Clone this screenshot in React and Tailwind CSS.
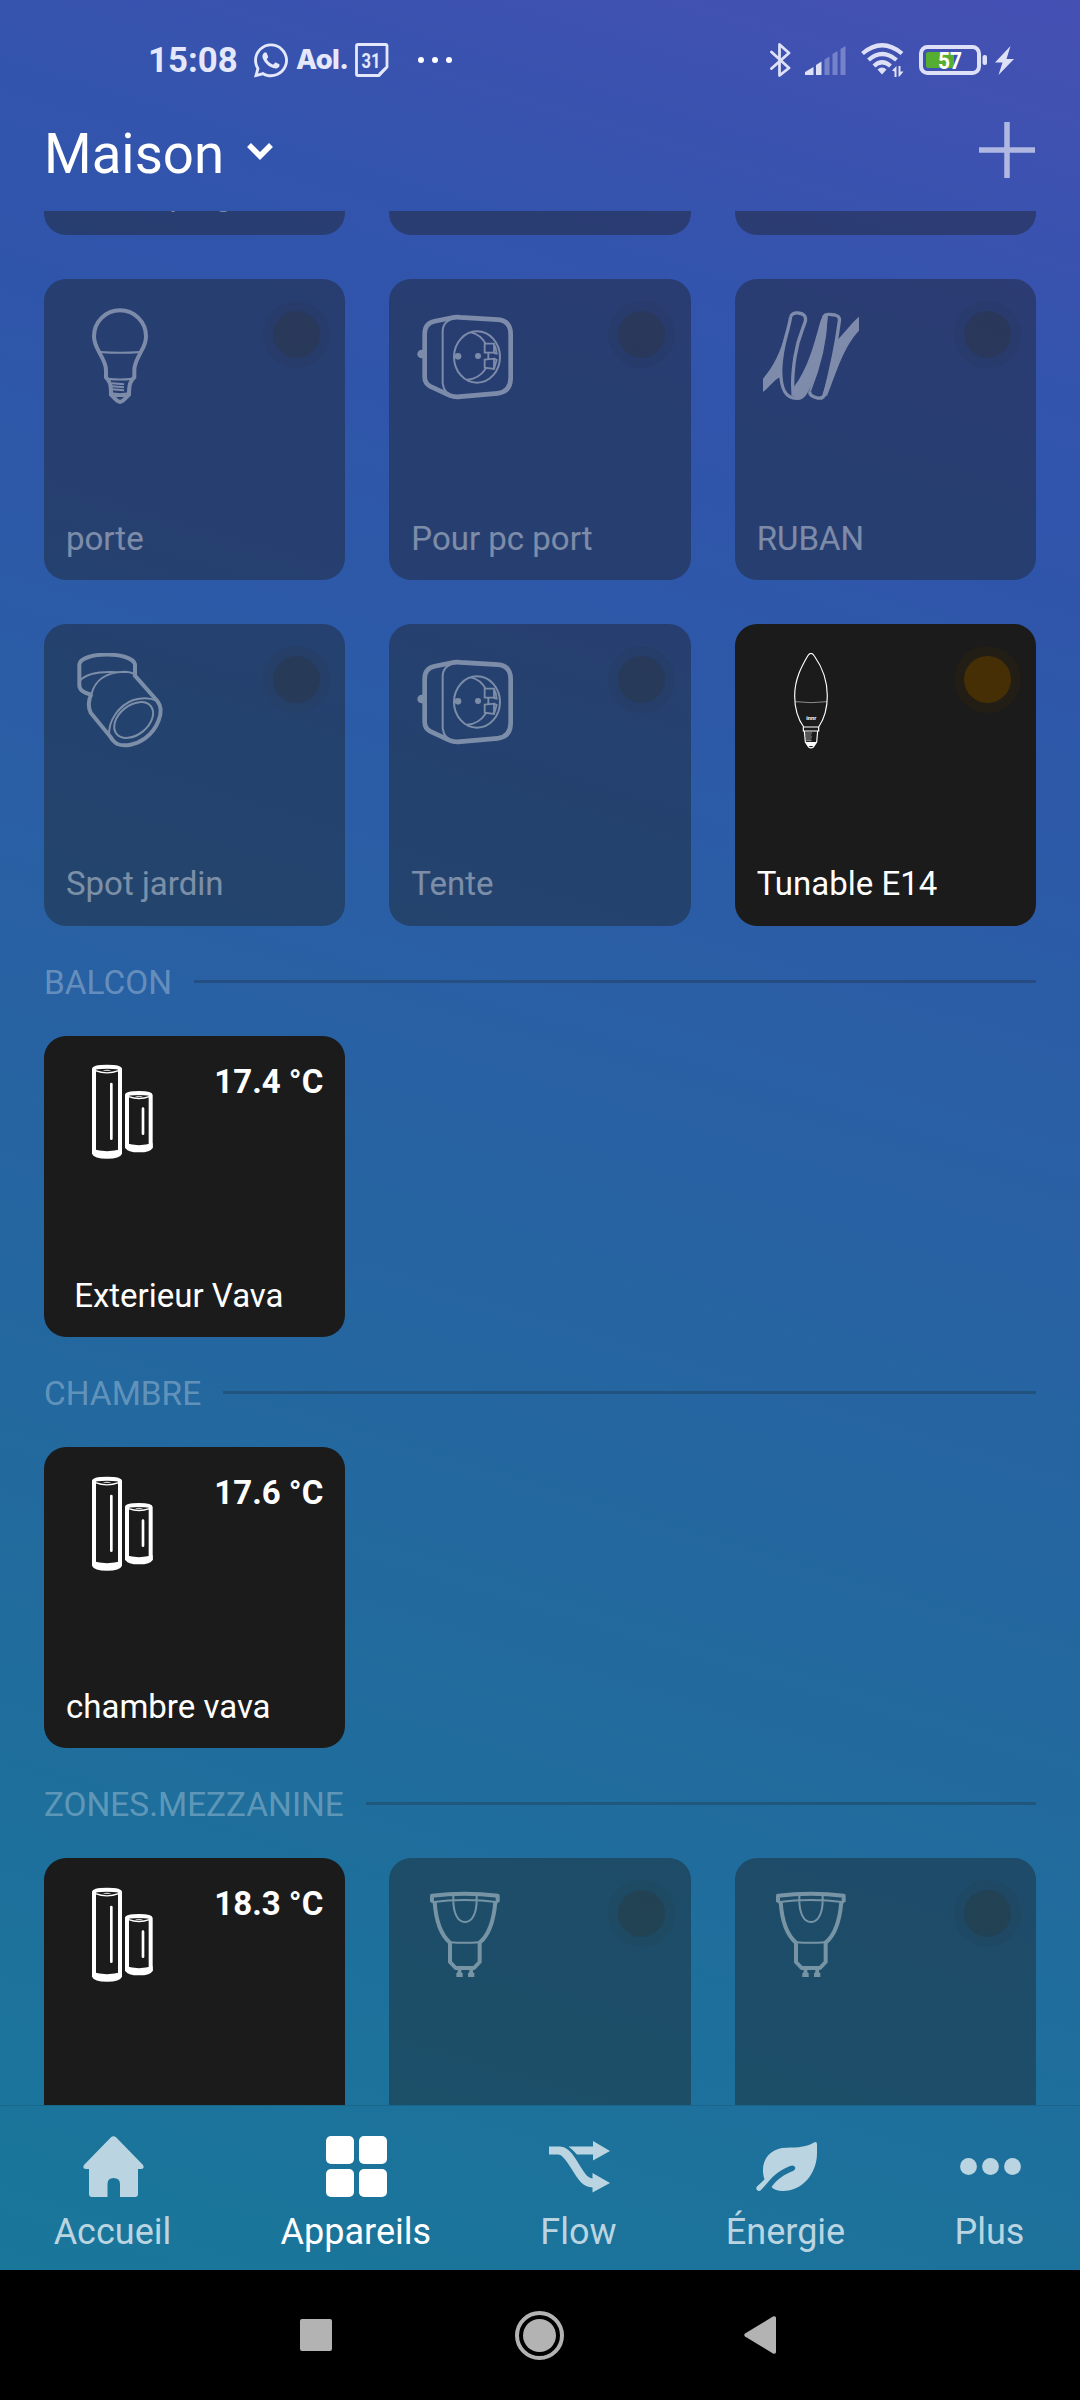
import React from 'react';
import clsx from 'clsx';
import { FaWhatsapp } from 'react-icons/fa';

function BulbIcon() {
  return (
    <svg viewBox="126 144 288 288" className="size-24" fill="none" stroke="currentColor" strokeWidth="12">
      <path d="M207 275C196 256 192 243 192 229A78 78 0 0 1 348 229C348 243 345 256 333 275C322 298 313 310 313 330V352C301 363 297 372 297 404L280 421Q270 430 260 421L243 404C243 372 240 364 228 352V330C228 310 218 297 207 275Z" />
      <path strokeWidth="6" d="M210 276Q270 281 332 276M234 356Q270 361 306 356M246 370L282 373M246 379L282 382M246 388L282 391M243 400Q270 405 298 400M252 408H290" />
    </svg>
  );
}

function PlugIcon() {
  return (
    <svg viewBox="110 144 288 288" className="size-24" fill="none" stroke="currentColor" strokeWidth="14">
      <path d="M214 173L163 184Q133 190 133 222V350Q133 370 150 379L208 406Q222 412 240 410L352 400Q390 396 391 355V222Q391 182 352 179L240 172Q226 170 214 173Z" />
      <path strokeWidth="6" d="M228 174Q187 180 187 215V370Q191 402 222 409" />
      <ellipse strokeWidth="6" cx="290" cy="291" rx="69" ry="77" />
      <path strokeWidth="5.5" d="M272 217Q301 224 316 251M260 359Q295 357 316 326M313 251H341V278H313ZM313 299L341 296V327L313 323ZM324 278V298M341 252Q347 262 349 281L341 279M341 327L349 300L341 296" />
      <circle cx="233" cy="289" r="10" fill="currentColor" stroke="none" />
      <circle cx="293" cy="288" r="9" fill="currentColor" stroke="none" />
      <circle cx="124" cy="282" r="13" fill="currentColor" stroke="none" />
    </svg>
  );
}

function StripIcon() {
  return (
    <svg viewBox="129 144 288 288" className="size-24" fill="none" stroke="currentColor" strokeWidth="10" strokeLinejoin="round">
      <path d="M212 170Q218 156 236 159Q260 162 256 184C249 208 235 228 225 290C218 335 215 365 220 405M212 170C203 225 184 255 182 330C182 385 195 415 230 415Q244 414 255 392" />
      <path stroke="none" fill="currentColor" d="M129 356C160 320 182 275 197 218L188 290L184 350C168 352 150 380 129 396ZM222 380C262 330 283 250 298 195Q304 172 314 160L323 170C318 245 300 325 276 372C262 402 252 420 236 419L214 405ZM417 170V212C372 258 350 335 321 408L308 402C330 335 343 290 350 242C371 222 395 188 417 170Z" />
      <path d="M310 172Q316 162 328 163L345 165Q361 169 358 184C350 245 343 290 314 403Q309 417 292 414Q266 408 270 394" />
      <path strokeWidth="6" d="M320 168C318 240 300 320 270 394" />
    </svg>
  );
}

function SpotIcon() {
  return (
    <svg viewBox="126 129 288 288" className="size-24" fill="none" stroke="currentColor" strokeWidth="12">
      <path d="M184 254Q148 246 148 226V163C155 124 305 124 315 163V196" />
      <path strokeWidth="6" d="M150 212C168 192 210 184 262 187M184 254C194 212 222 187 284 185Q302 185 312 192" />
      <path d="M312 194L382 273C408 305 378 362 345 385C318 404 284 411 262 402Q250 396 240 379L182 308Q170 282 184 252" />
      <path strokeWidth="6" d="M238 380C232 330 270 285 310 270Q350 258 380 272" />
      <ellipse strokeWidth="6" cx="311" cy="330" rx="66" ry="44" transform="rotate(-39 311 330)" />
    </svg>
  );
}

function CandleIcon() {
  return (
    <svg viewBox="129 127 288 288" className="size-24" fill="none" stroke="currentColor" strokeWidth="3.5">
      <path d="M251 349C234 325 224 297 224 255C224 205 245 167 263 136Q273 120 283 136C305 167 322 205 322 255C322 297 312 325 296 349Z" />
      <path strokeWidth="2.5" opacity=".6" d="M226 273Q273 279 321 273" />
      <path d="M250 349V361H296V349M253 361L256 394L266 409Q273 414 280 409L290 394L293 361" />
      <path strokeWidth="2" opacity=".8" d="M256 367H276M256 373H274M257 379H276M257 385H274M258 390H275" />
      <path stroke="none" fill="currentColor" d="M256 394H290L282 406H264Z" />
      <text x="274" y="329" textAnchor="middle" fontSize="17" fontWeight="700" fill="currentColor" stroke="none">innr</text>
    </svg>
  );
}

function SensorIcon() {
  return (
    <svg viewBox="126 133 288 288" className="size-24" fill="none" stroke="currentColor" strokeWidth="12">
      <path d="M192 402V148Q192 141 231 141Q270 141 270 148V402M291 386V226Q291 220 327 220Q362 220 362 226V386" />
      <path strokeWidth="4" d="M196 153Q231 166 266 153M296 231Q327 242 358 231" />
      <path fill="currentColor" stroke="none" d="M218 152Q231 148 244 152Q231 155 218 152ZM315 230Q327 226 339 230Q327 233 315 230Z" />
      <path fill="currentColor" stroke="none" d="M186 388Q231 401 276 388V402Q270 417 231 417Q192 417 186 402ZM286 371Q327 382 368 371V384Q362 398 327 398Q292 398 286 384Z" />
      <path strokeWidth="8" strokeLinecap="round" d="M244 193V357M339 267V342" />
    </svg>
  );
}

function Gu10Icon() {
  return (
    <svg viewBox="1160 381 288 288" className="size-24" fill="none" stroke="currentColor" strokeWidth="12" strokeLinejoin="round">
      <path d="M1205 426V407Q1303 395 1402 407V426M1213 426C1217 485 1232 525 1259 548V606L1276 624H1331L1348 606V548C1376 525 1390 485 1395 426" />
      <path strokeWidth="6" d="M1203 427Q1303 413 1404 427M1260 547Q1303 550 1347 547M1269 405V420C1269 455 1280 486 1304 486C1328 486 1339 455 1339 420V405" />
      <path fill="currentColor" stroke="none" d="M1282 628H1293V637L1297 640V651H1278V640L1282 637ZM1317 628H1328V637L1332 640V651H1313V640L1317 637Z" />
    </svg>
  );
}

const sections = [
  {
    devices: [
      { name: 'El Camping', icon: BulbIcon },
      { icon: PlugIcon },
      { icon: BulbIcon },
      { name: 'porte', icon: BulbIcon },
      { name: 'Pour pc port', icon: PlugIcon },
      { name: 'RUBAN', icon: StripIcon },
      { name: 'Spot jardin', icon: SpotIcon },
      { name: 'Tente', icon: PlugIcon },
      { name: 'Tunable E14', icon: CandleIcon, active: true },
    ],
  },
  { title: 'BALCON', devices: [{ name: ' Exterieur Vava', icon: SensorIcon, active: true, value: '17.4 °C' }] },
  { title: 'CHAMBRE', devices: [{ name: 'chambre vava', icon: SensorIcon, active: true, value: '17.6 °C' }] },
  {
    title: 'ZONES.MEZZANINE',
    devices: [
      { name: ' Mezzanine', icon: SensorIcon, active: true, value: '18.3 °C' },
      { name: 'Mezzanine', icon: Gu10Icon },
      { name: 'Mezzanine', icon: Gu10Icon },
    ],
  },
];

function DeviceCard({ device }) {
  const { name, icon: Icon, active, value } = device;
  return (
    <div
      className={clsx(
        'relative flex h-[301.33px] flex-col justify-between rounded-[22px] px-[22px] pt-[28.5px] pb-[22.5px]',
        active ? 'bg-[#1b1b1b] text-white' : 'bg-[#1b1b1b]/40 text-white'
      )}
    >
      <div className={clsx('flex items-start justify-between pl-1.5', !active && 'opacity-40')}>
        <Icon />
        {value && <span className="-mt-[2.5px] text-[33px] leading-[39px] font-bold whitespace-nowrap">{value}</span>}
      </div>
      <span className={clsx('text-[33px] leading-[39px] whitespace-pre', !active && 'opacity-40')}>{name}</span>
      {!value && (
        <div
          className={clsx(
            'absolute top-[21.5px] right-[15.5px] flex size-[67px] items-center justify-center rounded-full',
            active ? 'bg-[#221e16]' : 'bg-[#2a2d38]/10'
          )}
        >
          <div className={clsx('size-[47px] rounded-full', active ? 'bg-[#462f04]' : 'bg-[#302f26]/25')} />
        </div>
      )}
    </div>
  );
}

function SectionTitle({ title }) {
  return (
    <div className="flex h-[110px] items-center gap-[22px]">
      <span className="mt-[3px] text-[33.4px] leading-[39px] text-white/30">{title}</span>
      <div className="mt-px h-[3px] flex-1 bg-[#1b1b1b]/25" />
    </div>
  );
}

function StatusBar() {
  return (
    <div className="flex h-[120px] items-center justify-between pr-[66px] pl-[148px] text-[#e4e8fa]">
      <div className="flex items-center">
        <span className="mt-px w-[89px] text-[34.8px] leading-none font-bold">15:08</span>
        <FaWhatsapp className="ml-[17px] h-[39px] w-[34px]" />
        <span className="ml-[8px] w-[50px] font-[Inter] text-[27.5px] leading-none font-extrabold tracking-[-0.6px]">Aol.</span>
        <svg viewBox="0 0 34 34" className="ml-[9px] size-[34px]" fill="none" stroke="currentColor" strokeWidth="2.8">
          <path strokeLinejoin="round" d="M1.5 3Q1.5 1.5 3 1.5H30.5Q32 1.5 32 3V24L24 32.5H3Q1.5 32.5 1.5 31Z" />
          <path strokeWidth="2" d="M31 24.5L24 31" />
          <text x="16" y="24.5" textAnchor="middle" fontSize="21" fontWeight="700" fill="currentColor" stroke="none" textLength="19" lengthAdjust="spacingAndGlyphs">31</text>
        </svg>
        <div className="ml-[29px] flex gap-2 text-white">
          <i className="size-1.5 rounded-full bg-current" />
          <i className="size-1.5 rounded-full bg-current" />
          <i className="size-1.5 rounded-full bg-current" />
        </div>
      </div>
      <div className="flex items-center text-[#dde0f6]">
        <svg viewBox="0 0 21 34" className="h-[34px] w-[21px]" fill="none" stroke="currentColor" strokeWidth="2.8" strokeLinejoin="round" strokeLinecap="round">
          <path d="M1.5 9L19 25L9.5 32.5V1.5L19 10L1.5 25.5" />
        </svg>
        <svg viewBox="0 0 41 29" className="ml-3.5 h-[29px] w-[41px]" fill="currentColor">
          <path d="M0 29V26L8.500 21V29ZM11 29V19L16.500 15.500V29Z" />
          <path opacity=".35" d="M19.500 29V13.500L24.500 10.500V29ZM27.500 29V8L32.500 5V29ZM35.500 29V3L40.500 0V29Z" />
        </svg>
        <svg viewBox="0 0 43 34" className="ml-[15px] h-[34px] w-[43px]" fill="none" stroke="currentColor" strokeWidth="4.2">
          <path d="M1.500 10.500Q21 -6 41 10.500M7.500 17Q21 5 35.500 17M13 23Q21 15.500 29.500 23" />
          <path fill="currentColor" stroke="none" d="M16.500 26.500Q21 22.500 25.500 26.500L21 31.500ZM31 27.500L35.500 23V34H33.500V28.500ZM37.500 23H39.500V28.500H42.500L38.500 33.500H37.500Z" />
        </svg>
        <svg viewBox="0 0 68 30" className="ml-[15px] h-[30px] w-[68px]">
          <rect x="2" y="2" width="58" height="26" rx="6.500" fill="none" stroke="currentColor" strokeWidth="4" />
          <path fill="#55ad31" d="M9 7H35V23H9Q7 23 7 21V9Q7 7 9 7Z" />
          <rect x="63.500" y="10" width="4.500" height="10" rx="2" fill="currentColor" />
          <text x="31" y="23.900" textAnchor="middle" fontSize="23" fontWeight="700" fill="#fff" textLength="24" lengthAdjust="spacingAndGlyphs">57</text>
        </svg>
        <svg viewBox="0 0 19 29" className="ml-2 h-[29px] w-[19px]" fill="currentColor">
          <path d="M15.500 0L0 16.500H7.500L3.500 29L19 13H11.500Z" />
        </svg>
      </div>
    </div>
  );
}

function HomeIcon() {
  return (
    <svg viewBox="0 0 61 61" className="size-[61px]" fill="currentColor">
      <path d="M28 1.300Q30.500 -1 33 1.300L60 29Q62 33 58 33H55V58Q55 61 52 61H37V48Q37 42 30.500 42Q24.500 42 24.500 48V61H9Q6 61 6 58V33H3Q-1 33 1 29Z" />
    </svg>
  );
}

function DevicesIcon() {
  return (
    <svg viewBox="0 0 61 61" className="size-[61px]" fill="currentColor">
      <rect width="28" height="28" rx="5" />
      <rect x="33" width="28" height="28" rx="5" />
      <rect y="33" width="28" height="28" rx="5" />
      <rect x="33" y="33" width="28" height="28" rx="5" />
    </svg>
  );
}

function FlowIcon() {
  return (
    <svg viewBox="0 0 61 61" className="size-[61px]" fill="currentColor">
      <path d="M0 10.500H10C17 10.500 22 15 28 25C35 36 38 42 43.500 42.500V37L61 47L43.500 56.500V51.500C34 51 30 45 22 32C16 23 13 18.500 9 18.500H0Z" />
      <path d="M19.500 10.500H44V5L61 15L44 24.500V18.500H28Q24 14 19.500 10.500Z" />
    </svg>
  );
}

function EnergyIcon() {
  return (
    <svg viewBox="0 0 61 61" className="size-[61px]" fill="currentColor">
      <path d="M58 6.500Q61 5 61 8.500V17C61 38 46 55 27 55Q19 55 15.500 51C21 43 29 38 37 35Q40 33.500 39 31Q37.500 28.500 34 30C25 33.500 18 39 13 45L5 54Q3 56 1 54Q-.5 52 1 50.500L8.500 43.500C3 26 13 14 26 12C38 11 48 12.500 58 6.500Z" />
    </svg>
  );
}

function MoreIcon() {
  return (
    <svg viewBox="0 0 61 61" className="size-[61px]" fill="currentColor">
      <circle cx="8.500" cy="30.500" r="8.400" />
      <circle cx="30.500" cy="30.500" r="8.400" />
      <circle cx="52.500" cy="30.500" r="8.400" />
    </svg>
  );
}

const tabs = [
  { label: 'Accueil', icon: HomeIcon },
  { label: 'Appareils', icon: DevicesIcon, active: true },
  { label: 'Flow', icon: FlowIcon },
  { label: 'Énergie', icon: EnergyIcon },
  { label: 'Plus', icon: MoreIcon },
];

export default function App() {
  return (
    <div className="flex h-[2400px] w-[1080px] flex-col overflow-hidden bg-black font-[Roboto,sans-serif]">
      <div className="flex h-[2270px] flex-col bg-[linear-gradient(197deg,#4550b3_0%,#3c52b0_8%,#3354ad_15%,#2f55aa_23%,#2960a4_46%,#216b9d_72%,#19779a_100%)]">
        <StatusBar />
        <header className="flex h-[91px] items-start justify-between pr-[45px] pl-11">
          <div className="flex items-center gap-[23px]">
            <h1 className="mt-px text-[54.6px] leading-[66px] text-white">Maison</h1>
            <svg viewBox="0 0 26 17" className="-mt-1 h-[17px] w-[26px]" fill="none" stroke="#fff" strokeWidth="5.5">
              <path d="M2 2L13 13L24 2" />
            </svg>
          </div>
          <svg viewBox="0 0 56 56" className="mt-0.5 size-14" stroke="#b0b8e2" strokeWidth="5.500">
            <path d="M0 28H56M28 0V56" />
          </svg>
        </header>

        {/* Device list, scrolled part of the way down */}
        <main className="h-[1894px] overflow-hidden px-11">
          <div className="-mt-[277.3px]">
            {sections.map((section, i) => (
              <section key={i}>
                {section.title && <SectionTitle title={section.title} />}
                <div className="grid grid-cols-3 gap-11">
                  {section.devices.map((device, j) => (
                    <DeviceCard key={j} device={device} />
                  ))}
                </div>
              </section>
            ))}
          </div>
        </main>

        <nav className="flex h-[165px] justify-around border-t border-black/10 pt-[30px]">
          {tabs.map(({ label, icon: Icon, active }) => (
            <div key={label} className={clsx('flex flex-col items-center', active ? 'text-white' : 'text-[#bad5e1]')}>
              <Icon />
              <span className="mt-3.5 mr-[2px] text-[36px] leading-[42px]">{label}</span>
            </div>
          ))}
        </nav>
      </div>

      <div className="flex h-[130px] items-center pl-[300px]">
        <div className="size-8 rounded-xs bg-[#b3b3b3]" />
        <div className="ml-[183px] flex size-[49px] items-center justify-center rounded-full border-4 border-[#b3b3b3]">
          <div className="size-[33px] shrink-0 rounded-full bg-[#b3b3b3]" />
        </div>
        <svg viewBox="0 0 32 38" className="ml-[180px] h-[38px] w-8" fill="#b3b3b3">
          <path d="M1 17.500L29 .5Q32 -.5 32 2V36Q32 38.500 29 37.500L1 20.500Q-.5 19 1 17.500Z" />
        </svg>
      </div>
    </div>
  );
}
